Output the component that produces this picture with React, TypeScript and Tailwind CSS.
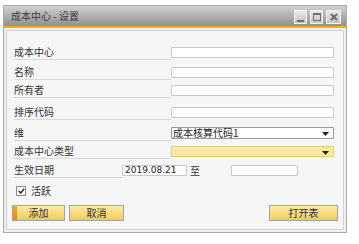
import React from 'react'

const font = { fontFamily: '"Noto Sans CJK SC", "Noto Sans", sans-serif' }

// one label row with underline
const Row: React.FC<{ label: string; h: string; children?: React.ReactNode }> = ({ label, h, children }) => (
  <div className={`flex items-end ${h}`}>
    <div className="w-[157px] border-b border-[#dadada] text-[10px] leading-[12px] pb-[1px] text-[#333]">{label}</div>
    <div className="mb-[2px]">{children}</div>
  </div>
)

const Input: React.FC<{ w?: string }> = ({ w = 'w-[163px]' }) => (
  <div className={`${w} h-[11px] bg-white border border-[#c9c9c9] rounded-[1px]`} />
)

const Arrow = () => (
  <svg width="7" height="4" viewBox="0 0 7 4" className="absolute right-[4px] top-[4px]">
    <path d="M0 0h7L3.5 4z" fill="#222" />
  </svg>
)

const TitleBtn: React.FC<{ children: React.ReactNode; w?: string }> = ({ children, w = 'w-[13px]' }) => (
  <div className={`${w} h-[14px] border border-[#f2f2f2] bg-gradient-to-b from-[#e8e8e8] to-[#c4c4c4] flex items-center justify-center`}>
    {children}
  </div>
)

export default function App() {
  return (
    <div className="w-[359px] h-[244px] bg-white pt-[5px] pl-[3px]" style={font}>
      <div className="w-[344px] h-[228px] border border-[#a9a9a9] bg-[#efefef] flex flex-col">
        {/* Título */}
        <div className="h-[20px] bg-gradient-to-b from-[#d2d2d2] to-[#8f8f8f] flex items-center pl-[7px] pr-[5px]">
          <span className="text-[10px] text-[#3a3a3a] leading-none">成本中心 - 设置</span>
          <div className="ml-auto flex gap-[3px] mt-[2px]">
            <TitleBtn>
              <div className="w-[7px] h-[2px] bg-[#6e6e6e] mt-[7px]" />
            </TitleBtn>
            <TitleBtn>
              <div className="w-[8px] h-[8px] border border-[#6e6e6e] border-t-2" />
            </TitleBtn>
            <TitleBtn w="w-[15px]">
              <svg width="8" height="8" viewBox="0 0 8 8">
                <path d="M1 1l6 6M7 1L1 7" stroke="#6a6a6a" strokeWidth="2" />
              </svg>
            </TitleBtn>
          </div>
        </div>
        <div className="h-[2px] bg-[#f2b200]" />

        {/* Cuerpo */}
        <div className="flex-1 p-[2px]">
          <div className="h-full border border-[#d2d2d2] bg-[#f6f6f6] pl-[7px] pt-[9px]">
            <Row label="成本中心" h="h-[20px]"><Input /></Row>
            <Row label="名称" h="h-[20px]"><Input /></Row>
            <Row label="所有者" h="h-[18px]"><Input /></Row>
            <Row label="排序代码" h="h-[22px]"><Input /></Row>
            <Row label="维" h="h-[21px]">
              <div className="relative w-[163px] h-[12px] bg-white border border-[#9a9a9a] rounded-[1px] text-[10px] leading-[10px] text-[#222] pl-[1px]">
                成本核算代码1
                <Arrow />
              </div>
            </Row>
            <Row label="成本中心类型" h="h-[18px]">
              <div className="relative w-[163px] h-[11px] bg-[#fdeaa0] border border-[#dccb8a] rounded-[1px]">
                <Arrow />
              </div>
            </Row>
            <div className="flex items-end h-[19px]">
              <div className="w-[108px] border-b border-[#dadada] text-[10px] leading-[12px] pb-[1px] text-[#333]">生效日期</div>
              <div className="mb-[2px] flex items-center">
                <div className="w-[65px] h-[11px] bg-white border border-[#c9c9c9] rounded-[1px] text-[9px] leading-[9px] text-[#222] pl-[2px]" style={{ fontFamily: '"DejaVu Sans", sans-serif' }}>
                  2019.08.21
                </div>
                <span className="text-[10px] leading-none text-[#333] ml-[3px]">至</span>
                <div className="w-[67px] h-[11px] bg-white border border-[#c9c9c9] rounded-[1px] ml-[31px]" />
              </div>
            </div>

            {/* Activo */}
            <div className="flex items-center mt-[8px] ml-[2px] h-[10px]">
              <div className="w-[10px] h-[10px] bg-white border border-[#8a8a8a] flex items-center justify-center">
                <svg width="7" height="6" viewBox="0 0 7 6">
                  <path d="M0.8 3l2 2L6.2 0.8" stroke="#222" strokeWidth="1.4" fill="none" />
                </svg>
              </div>
              <span className="text-[10px] leading-none text-[#333] ml-[5px]">活跃</span>
            </div>

            {/* Botones */}
            <div className="flex mt-[9px] -ml-[2px] pr-[5px]">
              <button className="relative w-[53px] h-[16px] border border-[#a4a4a4] bg-gradient-to-b from-[#fbe9a6] to-[#f0cc55] text-[10px] leading-none text-[#333] overflow-hidden">
                <span className="absolute left-0 top-0 bottom-0 w-[4px] bg-gradient-to-b from-[#f7a81c] to-[#ea8a00]" />
                添加
              </button>
              <button className="ml-[4px] w-[55px] h-[16px] border border-[#a4a4a4] bg-gradient-to-b from-[#fbe9a6] to-[#f0cc55] text-[10px] leading-none text-[#333]">
                取消
              </button>
              <button className="ml-auto w-[69px] h-[16px] border border-[#a4a4a4] bg-gradient-to-b from-[#fbe9a6] to-[#f0cc55] text-[10px] leading-none text-[#333]">
                打开表
              </button>
            </div>
          </div>
        </div>
      </div>
    </div>
  )
}
